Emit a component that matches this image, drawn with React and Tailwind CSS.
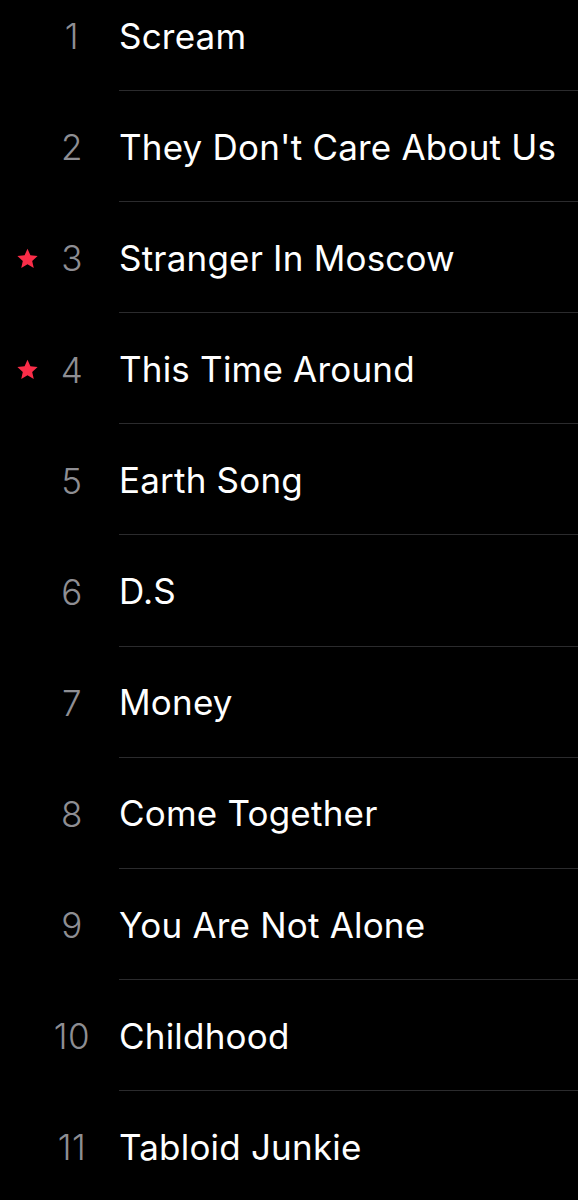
import React from "react";

const tracks = [
    { n: 1, title: "Scream" },
    { n: 2, title: "They Don't Care About Us" },
    { n: 3, title: "Stranger In Moscow", fav: true },
    { n: 4, title: "This Time Around", fav: true },
    { n: 5, title: "Earth Song" },
    { n: 6, title: "D.S" },
    { n: 7, title: "Money" },
    { n: 8, title: "Come Together" },
    { n: 9, title: "You Are Not Alone" },
    { n: 10, title: "Childhood" },
    { n: 11, title: "Tabloid Junkie" },
];

const Star = () => (
    <svg viewBox="0 0 24 24" className="w-[23px] h-[23px]" fill="#fa2d48">
        <path d="M12 1.8l3.05 6.9 7.5.75-5.65 5.03 1.63 7.37L12 18.05l-6.53 3.8 1.63-7.37L1.45 9.45l7.5-.75z" />
    </svg>
);

export default function App() {
    return (
        <div className="w-[578px] h-[1200px] bg-black overflow-hidden" style={{ fontFamily: "Inter, 'Noto Sans', sans-serif" }}>
            <div className="-mt-[20px]">
                {tracks.map((t, i) => (
                    <div key={t.n} className="flex h-[111.1px]">
                        <div className="w-[55px] flex items-center justify-center shrink-0 pt-[2px]">
                            {t.fav && <Star />}
                        </div>
                        <div className="w-[34px] flex items-center justify-center shrink-0 pt-[2px] text-[35px] tracking-[0.5px] text-[#8e8e93] font-light">
                            {t.n}
                        </div>
                        <div className={`flex-1 flex items-center ml-[30px] pt-[2px] ${i < tracks.length - 1 ? "border-b border-[#2b2b2d]" : ""}`}>
                            <span className="text-white text-[35px] tracking-[0.2px] whitespace-nowrap">{t.title}</span>
                        </div>
                    </div>
                ))}
            </div>
        </div>
    );
}
